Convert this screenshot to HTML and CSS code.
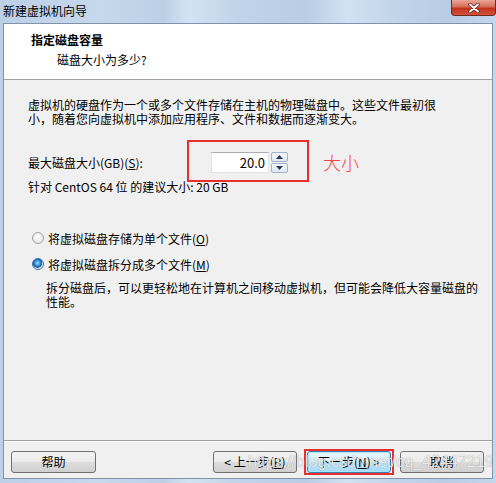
FILE: index.html
```html
<!DOCTYPE html>
<html lang="zh-CN">
<head>
<meta charset="utf-8">
<title>新建虚拟机向导</title>
<link rel="stylesheet" href="styles.css">
</head>
<body>
<div class="window">
  <div class="titlebar">
    <span class="title">新建虚拟机向导</span>
    <span class="close">
      <svg width="14" height="10" viewBox="0 0 14 10"><path d="M3 1.5 L11 8.5 M11 1.5 L3 8.5" stroke="#5a1a10" stroke-width="3.4" stroke-linecap="round"/><path d="M3 1.5 L11 8.5 M11 1.5 L3 8.5" stroke="#ffffff" stroke-width="2" stroke-linecap="round"/></svg>
    </span>
  </div>
  <div class="client">
    <div class="header">
      <div class="h-title">指定磁盘容量</div>
      <div class="h-sub">磁盘大小为多少?</div>
    </div>
    <div class="body">
      <p class="intro">虚拟机的硬盘作为一个或多个文件存储在主机的物理磁盘中。这些文件最初很<br>小，随着您向虚拟机中添加应用程序、文件和数据而逐渐变大。</p>
      <div class="size-row">
        <span class="size-label">最大磁盘大小(GB)(<u>S</u>):</span>
        <div class="spin-wrap">
          <div class="spin-input">20.0</div>
          <div class="spin-btns">
            <span class="spin-btn"><svg width="7" height="4" viewBox="0 0 7 4"><path d="M0 4 L3.5 0 L7 4 Z" fill="#2a3a55"/></svg></span>
            <span class="spin-btn"><svg width="7" height="4" viewBox="0 0 7 4"><path d="M0 0 L3.5 4 L7 0 Z" fill="#2a3a55"/></svg></span>
          </div>
          <div class="mark mark-spin"></div>
        </div>
        <span class="note">大小</span>
      </div>
      <p class="hint">针对 CentOS 64 位 的建议大小: 20 GB</p>
      <div class="radio-row first">
        <span class="radio"></span>
        <span>将虚拟磁盘存储为单个文件(<u>O</u>)</span>
      </div>
      <div class="radio-row">
        <span class="radio checked"></span>
        <span>将虚拟磁盘拆分成多个文件(<u>M</u>)</span>
      </div>
      <p class="desc">拆分磁盘后，可以更轻松地在计算机之间移动虚拟机，但可能会降低大容量磁盘的<br>性能。</p>
    </div>
    <div class="footer">
      <button class="btn help">帮助</button>
      <div class="nav">
        <button class="btn">&lt; 上一步(<u>B</u>)</button>
        <span class="next-wrap">
          <button class="btn default">下一步(<u>N</u>) &gt;</button>
          <span class="mark mark-next"></span>
        </span>
        <button class="btn">取消</button>
      </div>
      <span class="watermark">https://blog.csdn.net/qq_42447219</span>
    </div>
  </div>
</div>
</body>
</html>
```

FILE: styles.css
```css
html, body {
  margin: 0;
  padding: 0;
}
body {
  width: 496px;
  height: 483px;
  overflow: hidden;
  font-family: "Noto Sans CJK SC", "Noto Sans", sans-serif;
  font-size: 12px;
  color: #000;
}
.window {
  width: 496px;
  height: 483px;
  box-sizing: border-box;
  padding: 0 3px 4px 3px;
  background: linear-gradient(90deg, #bcd0e6 0%, #c6d8ec 20%, #bccfe4 33%, #d3e3f4 38%, #c0d3e8 48%, #b9cde3 62%, #d2e2f3 70%, #c3d6ea 78%, #b8cce3 90%, #c4d7eb 100%);
  display: flex;
  flex-direction: column;
}
.titlebar {
  height: 23px;
  display: flex;
  justify-content: space-between;
  align-items: flex-start;
}
.title {
  line-height: 20px;
  padding-top: 1px;
  font-size: 12px;
  color: #000;
}
.close {
  width: 45px;
  height: 16px;
  box-sizing: border-box;
  border: 1px solid #6e2a1f;
  border-top: none;
  border-radius: 0 0 4px 4px;
  background: linear-gradient(#e9a697 0%, #d86d58 45%, #c2321c 55%, #d4553c 100%);
  display: flex;
  align-items: center;
  justify-content: center;
  margin-right: -3px;
}
.client {
  height: 456px;
  box-sizing: border-box;
  border: 1px solid #8093ab;
  background: #f0f0f0;
  display: flex;
  flex-direction: column;
}
.header {
  height: 56px;
  box-sizing: border-box;
  background: #fff;
  border-bottom: 1px solid #a0a0a0;
  padding: 8px 0 0 27px;
}
.h-title {
  font-weight: bold;
  line-height: 16px;
}
.h-sub {
  line-height: 16px;
  margin-top: 4px;
  padding-left: 26px;
}
.body {
  flex: 1;
  padding: 18px 0 0 24px;
}
.intro, .hint, .desc {
  margin: 0;
  line-height: 14px;
}
.size-row {
  display: flex;
  align-items: center;
  height: 21px;
  margin-top: 26px;
}
.size-label {
  width: 183px;
}
.spin-wrap {
  position: relative;
  display: flex;
  align-items: center;
  height: 21px;
}
.spin-input {
  width: 58px;
  height: 21px;
  box-sizing: border-box;
  background: #fff;
  border: 1px solid #e2e3ea;
  border-top-color: #abadb3;
  text-align: right;
  padding-right: 3px;
  font-size: 13px;
  line-height: 19px;
}
.spin-btns {
  margin-left: 2px;
  display: flex;
  flex-direction: column;
  gap: 1px;
}
.spin-btn {
  width: 17px;
  height: 10px;
  box-sizing: border-box;
  border: 1px solid #9fb2ca;
  border-radius: 2px;
  background: linear-gradient(#f4f8fc, #dde8f4);
  display: flex;
  align-items: center;
  justify-content: center;
}
.mark {
  position: absolute;
  border: 2px solid #ea2d2d;
  box-sizing: border-box;
  pointer-events: none;
}
.mark-spin {
  left: -24px;
  top: -12px;
  width: 122px;
  height: 42px;
}
.note {
  margin-left: 35px;
  font-size: 18px;
  font-weight: 300;
  color: #f04545;
  line-height: 21px;
}
.hint {
  margin-top: 7px;
}
.radio-row {
  display: flex;
  align-items: center;
  height: 14px;
  margin-top: 12px;
}
.radio-row.first {
  margin-top: 37px;
}
.radio {
  width: 12px;
  height: 12px;
  box-sizing: border-box;
  border-radius: 50%;
  border: 1px solid #a2a2a2;
  background: radial-gradient(circle at 50% 40%, #ffffff 0%, #ececec 60%, #d8d8d8 100%);
  margin: 0 4px 0 4px;
  flex: none;
}
.radio.checked {
  border-color: #3d6fa8;
  background: radial-gradient(circle at 45% 40%, #9fe2ff 0%, #2e8fd8 35%, #1a4f90 55%, #e4eef8 62%, #ffffff 100%);
}
.desc {
  margin-top: 10px;
  padding-left: 18px;
}
.footer {
  position: relative;
  height: 38px;
  box-sizing: border-box;
  border-top: 1px solid #a0a0a0;
  box-shadow: inset 0 1px #ffffff;
  padding: 10px 8px 5px 7px;
  display: flex;
  justify-content: space-between;
  overflow: hidden;
}
.nav {
  display: flex;
  gap: 0;
}
.btn {
  width: 85px;
  height: 22px;
  box-sizing: border-box;
  border: 1px solid #707070;
  border-radius: 3px;
  background: linear-gradient(#f2f2f2 0%, #ebebeb 48%, #dddddd 52%, #cfcfcf 100%);
  font-family: "Noto Sans CJK SC", "Noto Sans", sans-serif;
  font-size: 12px;
  color: #000;
  padding: 0;
  line-height: 18px;
}
.nav .btn {
  width: 84px;
}
.next-wrap {
  position: relative;
  margin: 0 9px 0 10px;
  display: flex;
}
.btn.default {
  border-color: #3c7fb1;
  box-shadow: inset 0 0 0 1px #a8e8ff;
  background: linear-gradient(#eaf6fd 0%, #d9f0fc 48%, #bee6fd 52%, #a7d9f5 100%);
}
.mark-next {
  left: -3px;
  top: -2px;
  width: 90px;
  height: 26px;
}
.watermark {
  position: absolute;
  left: 244px;
  top: 10px;
  font-family: "Liberation Sans", Arial, sans-serif;
  font-size: 16px;
  line-height: 22px;
  color: rgba(255, 255, 255, 0.8);
  text-shadow: 0 0 1px rgba(60, 60, 60, 0.55);
  white-space: nowrap;
  pointer-events: none;
}
```
